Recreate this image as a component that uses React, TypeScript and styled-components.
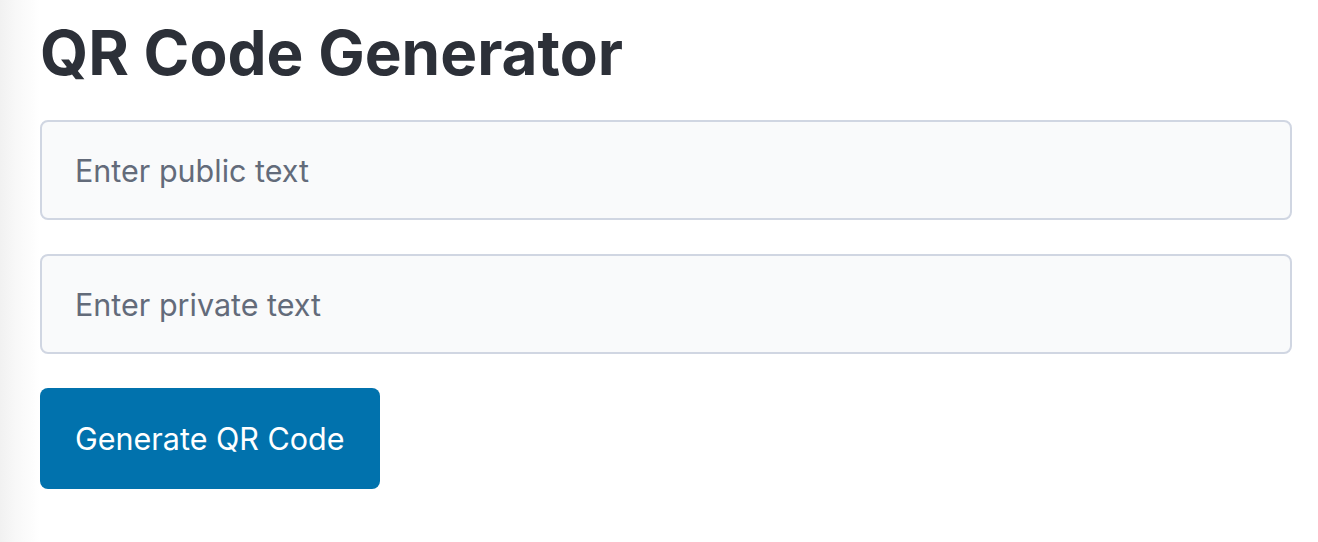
import React, { useState } from "react"
import styled, { createGlobalStyle } from "styled-components"

const GlobalStyle = createGlobalStyle`
    html, body {
        margin: 0;
        padding: 0;
        background: #ffffff;
    }
    body {
        font-family: Inter, "Noto Sans", sans-serif;
        -webkit-font-smoothing: antialiased;
    }
`

const App = () => {
    const [publicText, setPublicText] = useState("")
    const [privateText, setPrivateText] = useState("")

    return (
        <Page>
            <GlobalStyle />
            <Main>
                <Title>QR Code Generator</Title>
                <Form onSubmit={e => e.preventDefault()}>
                    <Input
                        type="text"
                        placeholder="Enter public text"
                        value={publicText}
                        onChange={e => setPublicText(e.target.value)}
                    />
                    <Input
                        type="text"
                        placeholder="Enter private text"
                        value={privateText}
                        onChange={e => setPrivateText(e.target.value)}
                    />
                    <Button type="submit">Generate QR Code</Button>
                </Form>
            </Main>
        </Page>
    )
}

export default App

const Page = styled.div`
    min-height: 542px;
    background: linear-gradient(
        to right,
        #f1f1f1 0px,
        #f8f8f8 16px,
        #ffffff 40px
    );
`

const Main = styled.main`
    padding: 16px 26px 0 40px;
`

const Title = styled.h1`
    margin: 0 0 30px;
    font-size: 62px;
    line-height: 74px;
    font-weight: 700;
    color: #2c3038;
`

const Form = styled.form`
    display: flex;
    flex-direction: column;
    align-items: flex-start;
    gap: 34px;
`

const Input = styled.input`
    box-sizing: border-box;
    width: 100%;
    height: 100px;
    padding: 0 33px;
    border: 2px solid #d0d6e2;
    border-radius: 8px;
    background: #f9fafb;
    font-family: Inter, "Noto Sans", sans-serif;
    font-size: 30.5px;
    color: #2c3038;
    outline: none;

    &::placeholder {
        color: #636b7a;
    }
`

const Button = styled.button`
    box-sizing: border-box;
    height: 101px;
    padding: 0 35px;
    border: none;
    border-radius: 8px;
    background: #0172ad;
    color: #ffffff;
    font-family: Inter, "Noto Sans", sans-serif;
    font-size: 30.5px;
    font-weight: 400;
    cursor: pointer;
`
